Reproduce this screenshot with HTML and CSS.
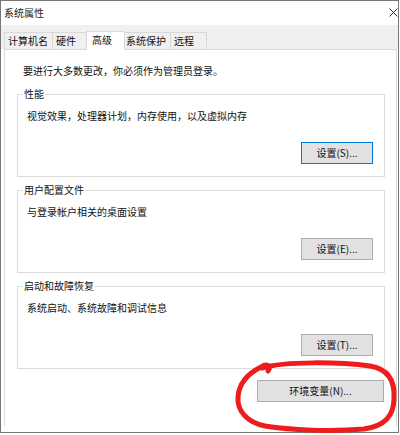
FILE: index.html
```html
<!DOCTYPE html>
<html lang="zh-CN">
<head>
<meta charset="utf-8">
<title>系统属性</title>
<link rel="stylesheet" href="styles.css">
</head>
<body>
<div class="window">
  <div class="titlebar">
    <span class="title">系统属性</span>
    <svg class="close" width="9" height="9" viewBox="0 0 9 9"><path d="M0.5 0.5 L8.5 8.5 M8.5 0.5 L0.5 8.5" stroke="#333" stroke-width="1" fill="none"/></svg>
  </div>
  <div class="tabs">
    <div class="tab">计算机名</div>
    <div class="tab">硬件</div>
    <div class="tab tab-active">高级</div>
    <div class="tab">系统保护</div>
    <div class="tab">远程</div>
  </div>
  <div class="panel">
    <p class="intro">要进行大多数更改，你必须作为管理员登录。</p>
    <fieldset class="group">
      <legend>性能</legend>
      <p class="desc">视觉效果，处理器计划，内存使用，以及虚拟内存</p>
      <div class="row"><button class="btn btn-default">设置(S)...</button></div>
    </fieldset>
    <fieldset class="group">
      <legend>用户配置文件</legend>
      <p class="desc">与登录帐户相关的桌面设置</p>
      <div class="row"><button class="btn">设置(E)...</button></div>
    </fieldset>
    <fieldset class="group">
      <legend>启动和故障恢复</legend>
      <p class="desc">系统启动、系统故障和调试信息</p>
      <div class="row"><button class="btn">设置(T)...</button></div>
    </fieldset>
    <div class="env-row"><button class="btn btn-env">环境变量(N)...</button></div>
  </div>
</div>
<svg class="scribble" width="400" height="435" viewBox="0 0 400 435">
  <path d="M262 368 C 285 361, 340 362, 370 366 C 388 369, 395 381, 394 398 C 394 415, 386 426, 364 429 C 330 432, 290 430, 265 426 C 246 422, 237 410, 238 397 C 239 383, 249 373, 261 367 C 267 363, 272 366, 268 371" fill="none" stroke="#ee1c1c" stroke-width="5" stroke-linecap="round" stroke-linejoin="round"/>
</svg>
</body>
</html>
```
FILE: styles.css
```css
* { box-sizing: border-box; }
html, body { margin: 0; padding: 0; }
body {
  width: 400px;
  height: 435px;
  overflow: hidden;
  background: #ffffff;
  font-family: "Noto Sans CJK SC", "Microsoft YaHei", sans-serif;
  font-size: 10px;
  color: #111;
  position: relative;
}
.window {
  width: 399px;
  height: 433px;
  border: 1px solid #777;
  background: #fff;
  display: flex;
  flex-direction: column;
}
.titlebar {
  height: 24px;
  display: flex;
  align-items: center;
  padding: 0 0 0 3px;
  background: #fff;
}
.title { line-height: 12px; color: #222; }
.close { margin-left: auto; margin-top: -1px; }
.tabs {
  height: 24px;
  background: #f0f0f0;
  display: flex;
  align-items: flex-end;
  padding-left: 3px;
}
.tab {
  height: 17px;
  min-width: 37px;
  padding: 0 4px 0 3px;
  border: 1px solid #d9d9d9;
  border-bottom: none;
  margin-right: -1px;
  background: #f0f0f0;
  line-height: 15px;
  color: #111;
  white-space: nowrap;
}
.tab-active {
  height: 19px;
  margin: 0 -3px -1px -2px;
  padding-left: 5px;
  min-width: 39px;
  background: #fff;
  z-index: 1;
  line-height: 16px;
}
.panel {
  height: 377px;
  margin: 0 1px 0 3px;
  border: 1px solid #d9d9d9;
  border-bottom: none;
  background: #fff;
  padding: 14px 11px 0 12px;
  display: flex;
  flex-direction: column;
}
.intro {
  margin: 0 0 0 6px;
  line-height: 14px;
}
.group {
  margin: 10px 0 0 0;
  border: 1px solid #dcdcdc;
  padding: 9px 11px 12px 9px;
  min-width: 0;
}
.group + .group { margin-top: 7px; }
.group legend {
  margin-left: -4px;
  padding: 0 1px;
  line-height: 12px;
  color: #111;
}
.desc {
  margin: 0;
  line-height: 14px;
}
.row {
  display: flex;
  justify-content: flex-end;
  margin-top: 19px;
}
.btn {
  height: 22px;
  width: 72px;
  border: 1px solid #adadad;
  background: #e1e1e1;
  font-family: inherit;
  font-size: 10px;
  color: #111;
  padding: 0;
  line-height: 18px;
}
.btn-default { border-color: #0078d7; }
.env-row {
  display: flex;
  justify-content: flex-end;
  margin-top: 11px;
  padding-right: 1px;
}
.btn-env { width: 127px; }
.scribble {
  position: absolute;
  left: 0;
  top: 0;
  pointer-events: none;
}
```
